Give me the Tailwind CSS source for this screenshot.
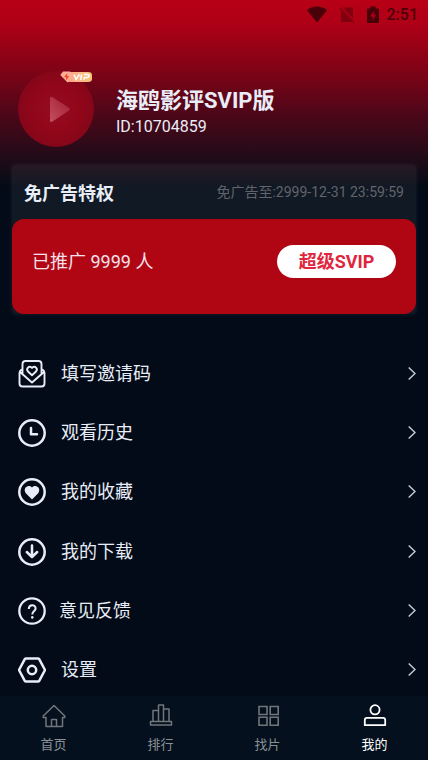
<!DOCTYPE html>
<html lang="zh-CN">
<head>
<meta charset="utf-8">
<meta name="viewport" content="width=device-width, initial-scale=1">
<title>我的</title>
<script src="https://cdn.jsdelivr.net/npm/@tailwindcss/browser@4"></script>
</head>
<body class="bg-[#020b17] font-['Roboto','Noto_Sans_CJK_SC',sans-serif] text-[#e9edf8]">
<div class="flex min-h-screen flex-col bg-[linear-gradient(to_bottom,#b80016_0px,#ae0016_24px,#800316_70px,#4c0719_115px,#240b18_155px,#020b17_188px)]">

  <header class="flex h-7 items-center justify-end gap-3 pt-px pr-[10px] text-[#4a0009]">
    <svg class="h-5 w-5" viewBox="0 0 20 20" fill="currentColor" aria-hidden="true"><path d="M0 5.200C5.500.400 14.500.400 20 5.200L10 17.500z"/></svg>
    <svg class="h-5 w-4" viewBox="0 0 16 20" aria-hidden="true"><path d="M3.500 2.500H14V13.500zM2 5.500L13.500 17H2z" fill="#800010"/><path d="M1 3.500L15 17.500" stroke="#800010" stroke-width="1.200"/></svg>
    <span class="flex items-center gap-2">
      <svg class="h-5 w-3" viewBox="0 0 12 20" aria-hidden="true"><path d="M1 3.500h2.500V1.500h5v2H11Q12 3.500 12 4.500V17q0 1-1 1H1q-1 0-1-1V4.500q0-1 1-1z" fill="currentColor"/><path d="M7 5.500L3 11.500h2.500V15.500L9.300 9.500H6.800z" fill="#a50016"/></svg>
      <time class="text-base leading-5 font-medium">2:51</time>
    </span>
  </header>

  <section class="flex items-center gap-[22px] px-[18px] pt-[43px]">
    <div class="relative h-19 w-19 shrink-0 rounded-full bg-[radial-gradient(circle,#930d22_0%,#93061a_40%,#780617_100%)]">
      <svg class="h-full w-full" viewBox="0 0 76 76" aria-hidden="true">
        <defs><linearGradient id="play" x1="0" y1="1" x2="1" y2="0"><stop offset="0" stop-color="#c24f60"/><stop offset="1" stop-color="#a31c30"/></linearGradient></defs>
        <path d="M34.500 26.300L51 36.800Q52.500 38 51 39.500L34.500 50.500Q32 52 32 49.500V27.500Q32 25 34.500 26.300z" fill="url(#play)"/>
      </svg>
      <svg class="absolute top-0 left-[42px] h-3 w-8" viewBox="0 0 32 12" role="img" aria-label="VIP">
        <defs><linearGradient id="vip"><stop offset="0" stop-color="#ff9f83"/><stop offset=".5" stop-color="#ffb98a"/><stop offset="1" stop-color="#f7c179"/></linearGradient></defs>
        <path d="M8 1H28Q32 1 32 4V8Q32 11 28 11H8z" fill="url(#vip)"/>
        <path d="M3 .500H10L13 4L7.500 11.500L.300 4z" fill="#ffae96"/>
        <path d="M7.500 2L4 6.300H6.300L5.800 9.500L9.300 5.200H7z" fill="#f0441e"/>
        <path d="M14 3.500L16 8.500L19.500 3.500M21.500 3.500L20.800 8.800M24 8.800L24.300 6.500H27.500Q29.200 6.300 29.200 4.800Q29.200 3.500 27.500 3.500H23.800" fill="none" stroke="#fff" stroke-width="1.500"/>
      </svg>
    </div>
    <div class="min-w-0 pt-2">
      <h1 class="text-[22px] leading-7 font-bold">海鸥影评SVIP版</h1>
      <p class="text-base leading-6">ID:10704859</p>
    </div>
  </section>

  <section class="mx-3 mt-[18px] rounded-sm bg-white/6 shadow-[0_0_4px_1px_rgba(255,255,255,0.06)]">
    <div class="flex h-[54px] items-center justify-between px-3">
      <h2 class="pt-1 text-lg leading-6 font-bold">免广告特权</h2>
      <p class="text-sm leading-5 text-[#62646a]">免广告至:2999-12-31 23:59:59</p>
    </div>
    <div class="flex h-[95px] items-center justify-between rounded-xl bg-[#b00614] pr-5 pb-[10px] pl-5">
      <p class="text-lg leading-6 text-[#f5e1ea]">已推广 9999 人</p>
      <button type="button" class="h-[33px] w-[119px] rounded-full bg-white text-lg leading-6 font-bold text-[#e0263e]">超级SVIP</button>
    </div>
  </section>

  <nav class="-mb-1 flex flex-1 pt-[30px]" aria-label="菜单">
    <ul class="flex w-full flex-col">
      <li class="flex min-h-14 flex-1"><a href="#invite" class="flex w-full items-center gap-[15px] pr-3 pl-[18px] text-lg leading-6">
        <svg class="h-7 w-7" viewBox="0 0 28 28" fill="none" stroke="currentColor" stroke-width="1.900" stroke-linejoin="round" stroke-linecap="round" aria-hidden="true"><path d="M4.500 13.500V4Q4.500 1 7.500 1H20.500Q23.500 1 23.500 4V13.500M4.500 9Q1.500 10.500 1.500 13V23.500Q1.500 26.500 4.500 26.500H23.500Q26.500 26.500 26.500 23.500V13Q26.500 10.500 23.500 9M2 12L14 22.500L26 12M14 15.200L10 11.500C7.500 8.500 11.500 4.800 14 8C16.500 4.800 20.500 8.500 18 11.500z"/></svg>
        <span class="flex-1">填写邀请码</span>
        <svg class="h-4 w-2" viewBox="0 0 8 16" fill="none" stroke="#c3cad3" stroke-width="1.500" aria-hidden="true"><path d="M.7 1.500L7 7.500L.7 13.500"/></svg></a></li>
      <li class="flex min-h-14 flex-1"><a href="#history" class="flex w-full items-center gap-[15px] pr-3 pl-[18px] text-lg leading-6">
        <svg class="h-7 w-7" viewBox="0 0 28 28" fill="none" stroke="currentColor" stroke-width="2.500" stroke-linecap="round" stroke-linejoin="round" aria-hidden="true"><circle cx="14" cy="14" r="12.700"/><path d="M13 9V15.200H19"/></svg>
        <span class="flex-1">观看历史</span>
        <svg class="h-4 w-2" viewBox="0 0 8 16" fill="none" stroke="#c3cad3" stroke-width="1.500" aria-hidden="true"><path d="M.7 1.500L7 7.500L.7 13.500"/></svg></a></li>
      <li class="flex min-h-14 flex-1"><a href="#favorites" class="flex w-full items-center gap-[15px] pr-3 pl-[18px] text-lg leading-6">
        <svg class="h-7 w-7" viewBox="0 0 28 28" fill="none" stroke="currentColor" stroke-width="2.500" aria-hidden="true"><circle cx="14" cy="14" r="12.700"/><path d="M14 21.500L7.800 15.200C4.300 10.500 10 5.500 14 9.500C18 5.500 23.700 10.500 20.200 15.200z" fill="currentColor" stroke="none"/></svg>
        <span class="flex-1">我的收藏</span>
        <svg class="h-4 w-2" viewBox="0 0 8 16" fill="none" stroke="#c3cad3" stroke-width="1.500" aria-hidden="true"><path d="M.7 1.500L7 7.500L.7 13.500"/></svg></a></li>
      <li class="flex min-h-14 flex-1"><a href="#downloads" class="flex w-full items-center gap-[15px] pr-3 pl-[18px] text-lg leading-6">
        <svg class="h-7 w-7" viewBox="0 0 28 28" fill="none" stroke="currentColor" stroke-width="2.500" stroke-linecap="round" stroke-linejoin="round" aria-hidden="true"><circle cx="14" cy="14" r="12.700"/><path d="M14 7.500V18.500M8.800 14L14 19L19.200 14"/></svg>
        <span class="flex-1">我的下载</span>
        <svg class="h-4 w-2" viewBox="0 0 8 16" fill="none" stroke="#c3cad3" stroke-width="1.500" aria-hidden="true"><path d="M.7 1.500L7 7.500L.7 13.500"/></svg></a></li>
      <li class="flex min-h-14 flex-1"><a href="#feedback" class="flex w-full items-center gap-[13px] pr-3 pl-[18px] text-lg leading-6">
        <svg class="h-7 w-7" viewBox="0 0 28 28" fill="none" stroke="currentColor" stroke-width="2.300" aria-hidden="true"><circle cx="14" cy="14" r="12.700"/><path d="M10.800 12C10.800 7.200 17.600 7.200 17.600 11.500C17.600 14 14.300 14.200 14.300 17.400" stroke-width="2"/><circle cx="14.300" cy="20.400" r="1.300" fill="currentColor" stroke="none"/></svg>
        <span class="flex-1">意见反馈</span>
        <svg class="h-4 w-2" viewBox="0 0 8 16" fill="none" stroke="#c3cad3" stroke-width="1.500" aria-hidden="true"><path d="M.7 1.500L7 7.500L.7 13.500"/></svg></a></li>
      <li class="flex min-h-14 flex-1"><a href="#settings" class="flex w-full items-center gap-[15px] pr-3 pl-[18px] text-lg leading-6">
        <svg class="h-7 w-7" viewBox="0 0 28 28" fill="none" stroke="currentColor" stroke-width="2.500" stroke-linejoin="round" aria-hidden="true"><path d="M8 2.500H20Q20.800 2.500 21.200 3.200L27 14L21.200 24.800Q20.800 25.500 20 25.500H8Q7.200 25.500 6.800 24.800L1 14L6.800 3.200Q7.200 2.500 8 2.500z"/><circle cx="14" cy="14" r="4.200"/></svg>
        <span class="flex-1">设置</span>
        <svg class="h-4 w-2" viewBox="0 0 8 16" fill="none" stroke="#c3cad3" stroke-width="1.500" aria-hidden="true"><path d="M.7 1.500L7 7.500L.7 13.500"/></svg></a></li>
    </ul>
  </nav>

  <nav class="sticky bottom-0 z-10 grid h-16 grid-cols-4 bg-[#04101e] text-[13px] leading-5 text-[#8b9096]" aria-label="标签栏">
    <a href="#home" class="flex flex-col items-center gap-[7px] pt-2">
      <svg class="h-6 w-6" viewBox="0 0 24 24" fill="none" stroke="#70757b" stroke-width="1.500" stroke-linejoin="round" aria-hidden="true"><path d="M12 1.500L1.200 12V13.500H4V22.500H20.500V13.500H22.800V12zM9.500 22.500V15.500H14.500V22.500"/></svg>
      <span>首页</span></a>
    <a href="#rank" class="flex flex-col items-center gap-[7px] pt-2">
      <svg class="h-6 w-6" viewBox="0 0 24 24" fill="none" stroke="#70757b" stroke-width="1.500" stroke-linejoin="round" aria-hidden="true"><path d="M1.500 17.500H22.500V21H1.500zM4 17.500V6.500H9.500V17.500M9.500 6.500V1H14.500V17.500M14.500 5H20V17.500"/></svg>
      <span>排行</span></a>
    <a href="#find" class="flex flex-col items-center gap-[7px] pt-2">
      <svg class="h-6 w-6" viewBox="0 0 24 24" fill="none" stroke="#70757b" stroke-width="1.600" aria-hidden="true"><path d="M3 2.500H11V10.500H3zM14.200 2.500H22.200V10.500H14.200zM3 13.200H11V21.200H3zM14.200 13.200H22.200V21.200H14.200z"/></svg>
      <span>找片</span></a>
    <a href="#me" aria-current="page" class="flex flex-col items-center gap-[7px] pt-2 text-white">
      <svg class="h-6 w-6" viewBox="0 0 24 24" fill="none" stroke="currentColor" stroke-width="1.800" aria-hidden="true"><circle cx="12" cy="5.800" r="4.600"/><path d="M4 13.800H20Q22.200 13.800 22.200 16V21.200H1.800V16Q1.800 13.800 4 13.800z" stroke-linejoin="round"/></svg>
      <span>我的</span></a>
  </nav>
</div>
</body>
</html>
